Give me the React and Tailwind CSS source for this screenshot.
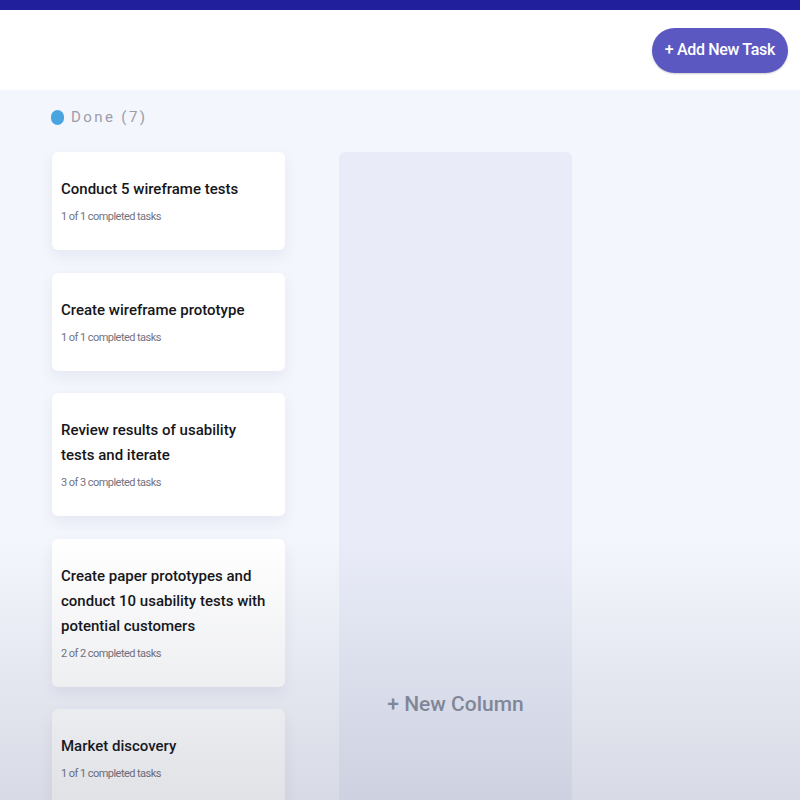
const tasks = [
  { title: 'Conduct 5 wireframe tests', done: 1, total: 1 },
  { title: 'Create wireframe prototype', done: 1, total: 1 },
  { title: 'Review results of usability tests and iterate', done: 3, total: 3 },
  { title: 'Create paper prototypes and conduct 10 usability tests with potential customers', done: 2, total: 2 },
  { title: 'Market discovery', done: 1, total: 1 },
  { title: 'Competitor analysis', done: 2, total: 2 },
];

const TaskCard = ({ task }) => (
  <div className="w-[233px] rounded-md bg-white py-[25px] pl-[9px] pr-[16px] shadow-[0_6px_14px_rgba(60,70,120,0.08)]">
    <p className="text-[15px] font-medium leading-[25px] text-[#16161a]">{task.title}</p>
    <p className="mt-[7px] text-[11px] leading-4 tracking-[-0.05em] text-[#737380]">
      {task.done} of {task.total} completed tasks
    </p>
  </div>
);

const App = () => {
  return (
    <div className="relative h-[800px] w-[800px] overflow-hidden bg-[#f4f6fd] font-['Roboto',sans-serif]">
      <div className="h-[10px] bg-[#211f9c]" />

      <header className="flex h-[80px] items-center justify-end bg-white pr-3">
        <button className="h-[45px] rounded-full bg-[#5b58c2] px-[13px] text-[16px] font-medium tracking-[-0.02em] text-white shadow-[0_1px_2px_rgba(0,0,0,0.2)]">
          + Add New Task
        </button>
      </header>

      <main className="flex gap-[54px] pl-[52px] pt-[19px]">
        <section className="flex flex-col">
          <div className="-ml-[1px] flex h-[17px] items-center gap-[7px]">
            <span className="h-[15px] w-[13px] rounded-full bg-[#49a5e0]" />
            <span className="text-[15px] tracking-[0.16em] text-[#9c9ca8]">Done (7)</span>
          </div>
          <div className="mt-[26px] flex flex-col gap-[22.5px]">
            {tasks.map((task) => (
              <TaskCard key={task.title} task={task} />
            ))}
          </div>
        </section>

        <section className="mt-[43px] flex h-[900px] w-[233px] items-start justify-center rounded-md bg-[#e9ecf8] pt-[538px]">
          <span className="text-[21px] font-medium leading-7 text-[#8a8f9e]">+ New Column</span>
        </section>
      </main>

      <div className="pointer-events-none absolute inset-x-0 bottom-0 h-[260px] bg-gradient-to-b from-transparent to-[rgba(40,50,80,0.14)]" />
    </div>
  );
};

export default App;
